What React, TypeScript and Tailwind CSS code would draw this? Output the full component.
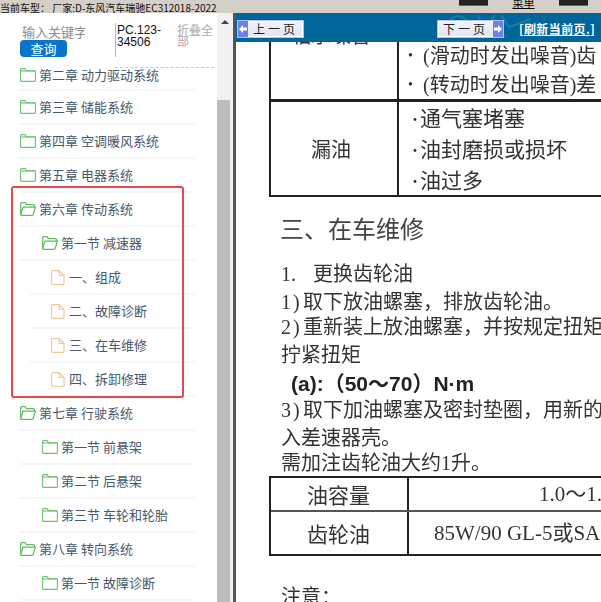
import type { ReactNode } from "react";

type Row = { label: string; kind: "open" | "closed" | "file"; level: 0 | 1 | 2 };

const rows: Row[] = [
  { label: "第三章 储能系统", kind: "closed", level: 0 },
  { label: "第四章 空调暖风系统", kind: "closed", level: 0 },
  { label: "第五章 电器系统", kind: "closed", level: 0 },
  { label: "第六章 传动系统", kind: "open", level: 0 },
  { label: "第一节 减速器", kind: "open", level: 1 },
  { label: "一、组成", kind: "file", level: 2 },
  { label: "二、故障诊断", kind: "file", level: 2 },
  { label: "三、在车维修", kind: "file", level: 2 },
  { label: "四、拆卸修理", kind: "file", level: 2 },
  { label: "第七章 行驶系统", kind: "open", level: 0 },
  { label: "第一节 前悬架", kind: "closed", level: 1 },
  { label: "第二节 后悬架", kind: "closed", level: 1 },
  { label: "第三节 车轮和轮胎", kind: "closed", level: 1 },
  { label: "第八章 转向系统", kind: "open", level: 0 },
  { label: "第一节 故障诊断", kind: "closed", level: 1 },
];

function ClosedFolder() {
  return (
    <svg width="16" height="14" viewBox="0 0 16 14" fill="none" stroke="#6cc36c" strokeWidth="1.1" className="shrink-0">
      <path d="M0.6 3V1.6q0-1 1-1h3.6l1.2 2.2h8q1 0 1 1v8.6q0 1-1 1H1.6q-1 0-1-1z" />
      <path d="M0.6 3h15" />
    </svg>
  );
}

function OpenFolder() {
  return (
    <svg width="16" height="14" viewBox="0 0 16 14" fill="none" stroke="#5fba5f" strokeWidth="1.2" className="shrink-0">
      <path d="M0.7 12.4V1.6q0-1 1-1h3.5l1.2 2h7q1 0 1 1v1.6" />
      <path d="M0.7 12.4 3 5.2h12.4l-2.2 7.2q-.2.9-1 .9H1.6q-.9 0-.9-.9z" />
    </svg>
  );
}

function FileIcon() {
  return (
    <svg width="14" height="15" viewBox="0 0 14 15" fill="none" stroke="#f2c99a" strokeWidth="1.2" className="shrink-0">
      <path d="M1.6.7h6.6l4.8 4.6v7.9q0 1.1-1.1 1.1H1.6q-1 0-1-1.1V1.8q0-1.1 1-1.1z" />
      <path d="M8.2.7v4.6h4.8" />
    </svg>
  );
}

function TreeRow({ row }: { row: Row }) {
  const pad = row.level === 0 ? "pl-0 ml-[20px]" : row.level === 1 ? "pl-[22px] ml-[20px]" : "pl-[21px] ml-[30px]";
  return (
    <div className={`${pad} mr-[22px] h-[34px] flex items-center gap-[3px] border-b-2 border-[#f5f6f6] text-[13px] text-[#48596b]`}>
      {row.kind === "open" && <OpenFolder />}
      {row.kind === "closed" && <ClosedFolder />}
      {row.kind === "file" && <FileIcon />}
      <span className={row.kind === "file" ? "ml-[1px] whitespace-nowrap" : "whitespace-nowrap"}>{row.label}</span>
    </div>
  );
}

function PagerArrow({ dir }: { dir: "prev" | "next" }) {
  return (
    <span className="w-[10px] h-full shrink-0 flex items-center justify-center bg-[#6f7fe8]">
      <svg width="8" height="8" viewBox="0 0 8 8" fill="#ffffff">
        {dir === "prev" ? <path d="M0 4 4 0v2.4h4v3.2H4V8z" /> : <path d="M8 4 4 0v2.4H0v3.2h4V8z" />}
      </svg>
    </span>
  );
}

function PagerButton({ dir, children }: { dir: "prev" | "next"; children: ReactNode }) {
  return (
    <div className="w-[67px] h-[18px] flex items-center bg-gradient-to-b from-[#f2f4fb] to-[#dfe3f3] border border-[#b9c0e8] shadow-[inset_0_0_0_1px_#ffffff] text-[12px] text-[#222]">
      {dir === "prev" && <PagerArrow dir="prev" />}
      <span className="flex-1 text-center tracking-[3px] whitespace-nowrap">{children}</span>
      {dir === "next" && <PagerArrow dir="next" />}
    </div>
  );
}

function Bullet({ size, children }: { size: string; children: ReactNode }) {
  return (
    <div className={`${size} flex items-center whitespace-nowrap leading-none`}>
      <span className="w-[21px] shrink-0 pl-[9px] text-[14px]">•</span>
      <span>{children}</span>
    </div>
  );
}

export default function App() {
  return (
    <div className="w-[601px] h-[602px] overflow-hidden flex flex-col bg-white font-['Noto_Sans_CJK_SC','Liberation_Sans',sans-serif]">
      <div className="h-[13px] shrink-0 bg-[#d4d0c8] flex items-start overflow-hidden">
        <span className="text-[10px] leading-[15px] text-[#111] whitespace-nowrap w-[459px]">当前车型： 厂家:D-东风汽车瑞驰EC312018-2022</span>
        <span className="w-[29px] h-[6px] bg-[#222] border-b border-[#666]" />
        <span className="w-[71px] text-center text-[11px] leading-[5px] text-black underline">菜单</span>
        <span className="w-[29px] h-[6px] bg-[#222] border-b border-[#666]" />
      </div>

      <div className="flex-1 flex min-h-0">
        <aside className="w-[217px] shrink-0 overflow-hidden">
          <div className="h-[55px] flex relative">
            <div className="w-[115px] pl-[20px] pt-[10px]">
              <div className="pl-[2px] text-[13px] leading-[17px] text-[#8a8a8a] w-[65px] overflow-hidden whitespace-nowrap">输入关键字</div>
              <div className="w-[47px] h-[17px] rounded-[4px] bg-[#0a74c9] text-white text-[13px] leading-[17px] text-center">查询</div>
            </div>
            <div className="mt-[10px] h-[34px] w-[46px] border-l border-[#b5b5b5] pl-[1px] text-[12px] leading-[11.5px] text-[#111] pt-[2px] font-['Liberation_Sans',sans-serif]">PC.123-34506</div>
            <div className="ml-[16px] mt-[11px] w-[38px] text-[12px] leading-[11px] text-[#aaaaaa]">折叠全部</div>
            <div className="absolute left-[115px] right-[3px] bottom-0 border-b border-dashed border-[#c8c8c8]" />
          </div>
          <div className="h-[23px] ml-[20px] mr-[22px] border-b-2 border-[#f5f6f6] flex items-end pb-[7px] gap-[3px] text-[13px] text-[#48596b] overflow-hidden">
            <ClosedFolder />
            <span className="whitespace-nowrap leading-[14px]">第二章 动力驱动系统</span>
          </div>
          {rows.map((row) => (
            <TreeRow key={row.label + row.level} row={row} />
          ))}
        </aside>

        <div className="w-[16px] shrink-0 bg-[#f1f1f1] flex flex-col">
          <div className="h-[87px] flex justify-center pt-[7px]">
            <span className="w-0 h-0 border-x-[4px] border-x-transparent border-b-[4px] border-b-[#444]" />
          </div>
          <div className="flex-1 w-[13px] bg-[#bdbdbd]" />
        </div>
        <div className="w-[3px] shrink-0 bg-[#555555]" />

        <main className="flex-1 min-w-0 flex flex-col">
          <div className="relative h-[29px] shrink-0 bg-[#006699] flex items-center pl-[1px] pt-[3px] z-10 overflow-hidden">
            <svg width="100" height="29" viewBox="0 0 100 29" fill="none" stroke="#ffffff" strokeOpacity="0.12" strokeWidth="2" className="absolute left-[205px] top-0">
              <path d="M4 14c6-12 16-14 22-6s-6 18-14 6" />
              <path d="M36 2l9 14 9-14M60 2l8 12 22-8" />
            </svg>
            <PagerButton dir="prev">上一页</PagerButton>
            <div className="ml-[133px] relative">
              <PagerButton dir="next">下一页</PagerButton>
            </div>
            <span className="w-[5px] h-[14px] border-b border-[#3355dd]" />
            <span className="relative ml-[10px] text-[12px] tracking-[0.4px] font-bold text-white underline whitespace-nowrap">[刷新当前页.]</span>
          </div>

          <div className="flex-1 min-h-0 overflow-hidden pl-[33px] text-[#333] blur-[0.35px]">
            <div className="w-[420px] -mt-[12px] border-2 border-t-0 border-[#222]">
              <div className="flex h-[72px] border-b-[3px] border-[#222]">
                <div className="w-[128px] shrink-0 pr-[6px] text-center text-[20px] leading-[26px] border-r-2 border-[#222] overflow-hidden">
                  <div className="-mt-[8px]">轴承噪音</div>
                </div>
                <div className="flex-1 pt-[11px] font-['Liberation_Serif','Noto_Sans_CJK_SC',serif]">
                  <Bullet size="text-[20px] h-[29px]"><span className="pl-[3px]">(滑动时发出噪音)齿</span></Bullet>
                  <Bullet size="text-[20px] h-[29px]"><span className="pl-[3px]">(转动时发出噪音)差</span></Bullet>
                </div>
              </div>
              <div className="flex h-[93px]">
                <div className="w-[128px] shrink-0 pr-[6px] flex items-center justify-center text-[20px] border-r-2 border-[#222]">漏油</div>
                <div className="flex-1">
                  <Bullet size="text-[21px] h-[31px]">通气塞堵塞</Bullet>
                  <Bullet size="text-[21px] h-[31px]">油封磨损或损坏</Bullet>
                  <Bullet size="text-[21px] h-[31px]">油过多</Bullet>
                </div>
              </div>
            </div>

            <div className="pl-[11px] mt-[13px] text-[24px] leading-[36px] text-[#444] whitespace-nowrap">三、在车维修</div>
            <div className="pl-[12px] mt-[15px] text-[20px] whitespace-nowrap font-['Liberation_Serif','Noto_Sans_CJK_SC',serif]">
              <div className="h-[28px] leading-[27px]"><span className="inline-block w-[32px]">1.</span>更换齿轮油</div>
              <div className="h-[25px] leading-[27px]"><span className="inline-block w-[22px] tracking-[2px]">1)</span>取下放油螺塞，排放齿轮油。</div>
              <div className="h-[28px] leading-[27px]"><span className="inline-block w-[22px] tracking-[2px]">2)</span>重新装上放油螺塞，并按规定扭矩</div>
              <div className="h-[28px] leading-[27px]">拧紧扭矩</div>
              <div className="h-[27px] leading-[27px] pl-[10px] text-[21px] font-['Liberation_Sans','Noto_Sans_CJK_SC',sans-serif] font-bold text-[#222]">(a):（50～70）N·m</div>
              <div className="h-[28px] leading-[27px]"><span className="inline-block w-[22px] tracking-[2px]">3)</span>取下加油螺塞及密封垫圈，用新的</div>
              <div className="h-[25px] leading-[27px]">入差速器壳。</div>
              <div className="h-[26px] leading-[27px]">需加注齿轮油大约1升。</div>
            </div>

            <div className="w-[420px] border-2 border-[#222] text-[21px] font-['Liberation_Serif','Noto_Sans_CJK_SC',serif]">
              <div className="flex h-[34px] border-b-2 border-[#555]">
                <div className="w-[138px] shrink-0 pr-[1px] text-center leading-[33px] border-r-2 border-[#222] font-['Noto_Sans_CJK_SC',sans-serif]">油容量</div>
                <div className="flex-1 pl-[130px] leading-[33px] whitespace-nowrap">1.0～1.5L</div>
              </div>
              <div className="flex h-[42px]">
                <div className="w-[138px] shrink-0 pr-[1px] text-center leading-[42px] border-r-2 border-[#222] font-['Noto_Sans_CJK_SC',sans-serif]">齿轮油</div>
                <div className="flex-1 pl-[25px] leading-[42px] whitespace-nowrap">85W/90 GL-5或SAE</div>
              </div>
            </div>

            <div className="pl-[12px] mt-[26px] text-[20px] leading-[27px]">注意：</div>
          </div>
        </main>
      </div>

      <div className="fixed left-[11px] top-[186px] w-[173px] h-[212px] border-2 border-[#e8484a] rounded-[3px] pointer-events-none" />
    </div>
  );
}
